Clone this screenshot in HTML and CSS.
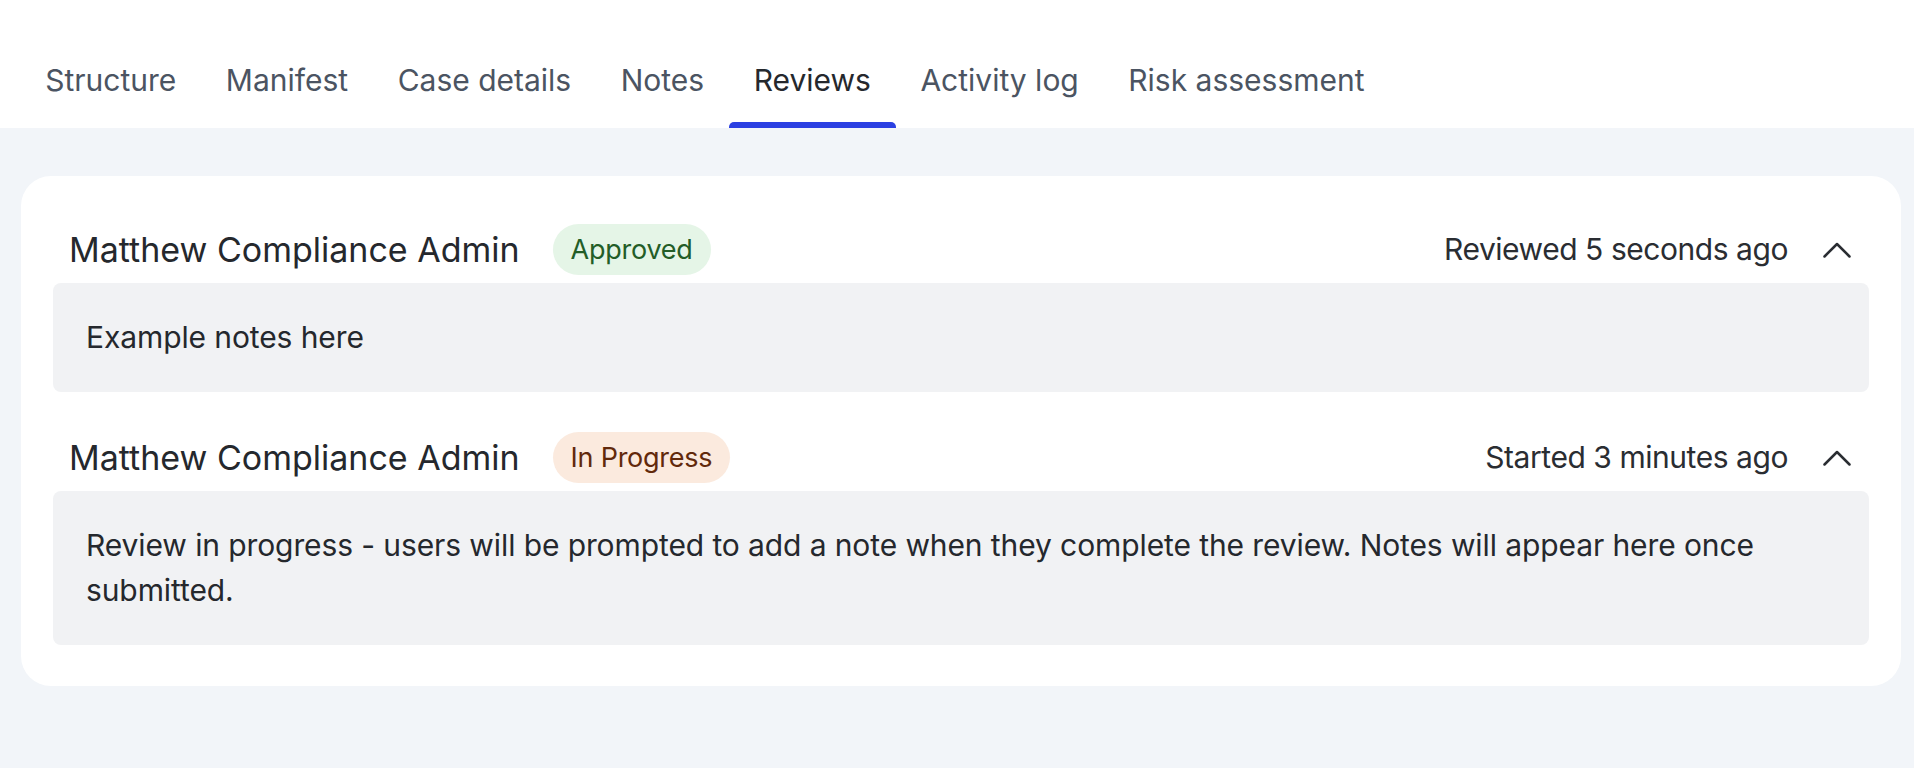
FILE: index.html
```html
<!DOCTYPE html>
<html lang="en">
<head>
    <meta charset="UTF-8">
    <meta name="viewport" content="width=device-width, initial-scale=1.0">
    <title>Reviews</title>
    <link rel="stylesheet" href="styles.css">
</head>
<body>
    <!-- Case tabs -->
    <nav class="case-tabs">
        <a class="case-tab">Structure</a>
        <a class="case-tab">Manifest</a>
        <a class="case-tab">Case details</a>
        <a class="case-tab">Notes</a>
        <a class="case-tab active">Reviews</a>
        <a class="case-tab">Activity log</a>
        <a class="case-tab">Risk assessment</a>
    </nav>

    <main class="page-content">
        <div class="reviews-card">
            <!-- Review item -->
            <div class="review-item">
                <div class="review-header">
                    <div class="review-who">
                        <span class="reviewer-name">Matthew Compliance Admin</span>
                        <span class="status-badge approved">Approved</span>
                    </div>
                    <div class="review-when">
                        <span>Reviewed 5 seconds ago</span>
                        <svg class="chevron" width="28" height="16" viewBox="0 0 28 16">
                            <polyline points="1.5,14.5 14,2 26.5,14.5" />
                        </svg>
                    </div>
                </div>
                <div class="review-notes">Example notes here</div>
            </div>

            <div class="review-item">
                <div class="review-header">
                    <div class="review-who">
                        <span class="reviewer-name">Matthew Compliance Admin</span>
                        <span class="status-badge in-progress">In Progress</span>
                    </div>
                    <div class="review-when">
                        <span>Started 3 minutes ago</span>
                        <svg class="chevron" width="28" height="16" viewBox="0 0 28 16">
                            <polyline points="1.5,14.5 14,2 26.5,14.5" />
                        </svg>
                    </div>
                </div>
                <div class="review-notes">Review in progress - users will be prompted to add a note when they complete the review. Notes will appear here once submitted.</div>
            </div>
        </div>
    </main>
</body>
</html>
```

FILE: styles.css
```css
/* Page */
body {
    margin: 0;
    background-color: #f2f5f9;
    font-family: Inter, "Noto Sans", sans-serif;
    color: #25282d;
}

/* Tabs */
.case-tabs {
    display: flex;
    background-color: #ffffff;
    padding: 58px 0 0 20.5px;
}

.case-tab {
    display: flex;
    flex-direction: column;
    gap: 19px;
    padding: 0 24.75px;
    font-size: 30px;
    line-height: 45px;
    color: #4b5462;
    cursor: pointer;
}

.case-tab::after {
    content: "";
    height: 6px;
    margin: 0 -24.75px;
    border-radius: 5px 5px 0 0;
    background-color: transparent;
}

.case-tab.active {
    color: #25282d;
}

.case-tab.active::after {
    background-color: #2b40e2;
}

/* Reviews card */
.page-content {
    padding: 48px 13px 0 21px;
}

.reviews-card {
    display: flex;
    flex-direction: column;
    gap: 32px;
    background-color: #ffffff;
    border-radius: 30px;
    padding: 40px 32px 41px;
}

.review-header {
    display: flex;
    justify-content: space-between;
    align-items: center;
    padding: 8px 18px 8px 16px;
}

.review-who {
    display: flex;
    align-items: center;
    gap: 33px;
}

.reviewer-name {
    font-size: 34px;
    line-height: 41px;
    color: #25282d;
}

.status-badge {
    font-size: 27px;
    line-height: 37px;
    letter-spacing: -0.25px;
    padding: 7px 18px;
    border-radius: 26px;
}

.status-badge.approved {
    background-color: #e5f5e7;
    color: #235d27;
}

.status-badge.in-progress {
    background-color: #fbeade;
    color: #62290b;
}

.review-when {
    display: flex;
    align-items: center;
    gap: 35px;
    font-size: 30px;
    line-height: 41px;
    letter-spacing: -0.45px;
    color: #2a2d32;
}

.chevron polyline {
    fill: none;
    stroke: #2a2d32;
    stroke-width: 2.5;
    stroke-linecap: round;
    stroke-linejoin: round;
}

.review-notes {
    background-color: #f1f2f4;
    border-radius: 8px;
    padding: 32px 33px;
    font-size: 30px;
    line-height: 45px;
    letter-spacing: -0.1px;
    color: #25282d;
}
```
